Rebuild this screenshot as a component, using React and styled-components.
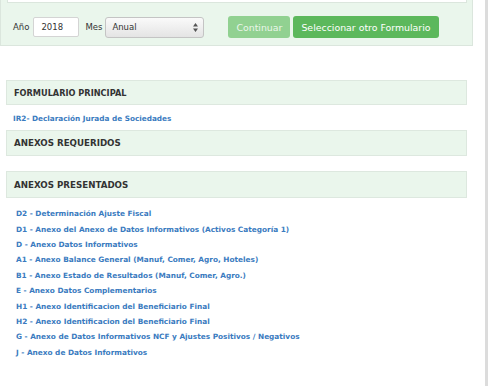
import React from 'react';
import styled, { createGlobalStyle } from 'styled-components';

const GlobalStyle = createGlobalStyle`
  html, body {
    margin: 0;
    padding: 0;
    background: #fff;
    font-family: 'DejaVu Sans', Verdana, sans-serif;
  }
`;

const Page = styled.div`
  display: flex;
  width: 490px;
  height: 386px;
  overflow: hidden;
`;

const Main = styled.div`
  width: 485px;
  display: flex;
  flex-direction: column;
`;

const Gutter = styled.div`
  width: 3px;
  background: #dcdcdc;
`;

const FilterPanel = styled.div`
  width: 471px;
  height: 45px;
  background: #eaf6ec;
  border: 1px solid #dbe6dd;
  border-top: none;
  display: flex;
  flex-direction: column;
`;

const PanelTop = styled.div`
  height: 2px;
  margin: 0 5px 0 6px;
  background: #fff;
  border: 1px solid #dbe6dd;
  border-top: none;
`;

const FilterRow = styled.div`
  display: flex;
  align-items: center;
  padding: 13px 0 0 12px;
`;

const Label = styled.label`
  font-size: 8.5px;
  color: #333;
  margin-right: ${p => p.$mr}px;
`;

const YearInput = styled.input`
  width: 46px;
  height: 20px;
  box-sizing: border-box;
  border: 1px solid #d4d4d4;
  border-radius: 2px;
  font-family: 'DejaVu Sans', Verdana, sans-serif;
  font-size: 8.5px;
  color: #333;
  padding: 0 7px;
  margin-right: 6px;
`;

const SelectBox = styled.div`
  width: 99px;
  height: 21px;
  box-sizing: border-box;
  border: 1px solid #c4c4c4;
  border-radius: 3px;
  background: linear-gradient(#fafafa, #e4e4e4);
  display: flex;
  align-items: center;
  justify-content: space-between;
  padding: 0 5px 0 6px;
  font-size: 8.5px;
  color: #333;
  margin-right: 24px;
`;

const Button = styled.button`
  height: 22px;
  border: none;
  border-radius: 3px;
  padding: 0 8px;
  background: ${p => (p.$disabled ? '#91d191' : '#5cb85c')};
  color: ${p => (p.$disabled ? '#eaf6ea' : '#fff')};
  font-family: 'DejaVu Sans', Verdana, sans-serif;
  font-size: 9.4px;
  margin-right: 3px;
`;

const Content = styled.div`
  display: flex;
  flex-direction: column;
  padding: 34px 0 0 6px;
  width: 461px;
`;

const SectionHeader = styled.div`
  box-sizing: border-box;
  height: ${p => p.$h}px;
  background: #eaf6ec;
  border: 1px solid #dde8df;
  display: flex;
  align-items: center;
  padding-left: 7px;
  font-weight: bold;
  font-size: ${p => p.$size}px;
  color: #333;
  margin-bottom: ${p => p.$mb}px;
`;

const MainLink = styled.a`
  font-size: 7.3px;
  font-weight: bold;
  color: #3a7bc0;
  text-decoration: none;
  padding-left: 7px;
  line-height: 9px;
  margin-bottom: 7px;
`;

const LinkList = styled.ul`
  list-style: none;
  margin: 0;
  padding: 8px 0 0 10px;
`;

const LinkItem = styled.li`
  height: 15.4px;
  display: flex;
  align-items: center;
  font-size: 7.35px;
  font-weight: bold;
  color: #3a7bc0;
`;

const anexos = [
  'D2 - Determinación Ajuste Fiscal',
  'D1 - Anexo del Anexo de Datos Informativos (Activos Categoría 1)',
  'D - Anexo Datos Informativos',
  'A1 - Anexo Balance General (Manuf, Comer, Agro, Hoteles)',
  'B1 - Anexo Estado de Resultados (Manuf, Comer, Agro.)',
  'E - Anexo Datos Complementarios',
  'H1 - Anexo Identificacion del Beneficiario Final',
  'H2 - Anexo Identificacion del Beneficiario Final',
  'G - Anexo de Datos Informativos NCF y Ajustes Positivos / Negativos',
  'J - Anexo de Datos Informativos',
];

const SelectArrows = () => (
  <svg width="5" height="9" viewBox="0 0 5 9">
    <path d="M2.5 0 L5 3.5 H0 Z M2.5 9 L5 5.5 H0 Z" fill="#555" />
  </svg>
);

export default function App() {
  return (
    <Page>
      <GlobalStyle />
      <Main>
        <FilterPanel>
          <PanelTop />
          <FilterRow>
            <Label $mr={4}>Año</Label>
            <YearInput defaultValue="2018" />
            <Label $mr={3}>Mes</Label>
            <SelectBox>
              <span>Anual</span>
              <SelectArrows />
            </SelectBox>
            <Button $disabled>Continuar</Button>
            <Button>Seleccionar otro Formulario</Button>
          </FilterRow>
        </FilterPanel>

        <Content>
          <SectionHeader $h={25} $size={8.2} $mb={9}>FORMULARIO PRINCIPAL</SectionHeader>
          <MainLink href="#">IR2- Declaración Jurada de Sociedades</MainLink>
          <SectionHeader $h={26} $size={8.7} $mb={15}>ANEXOS REQUERIDOS</SectionHeader>
          <SectionHeader $h={27} $size={8.7} $mb={0}>ANEXOS PRESENTADOS</SectionHeader>
          <LinkList>
            {anexos.map((a, i) => (
              <LinkItem key={i}>{a}</LinkItem>
            ))}
          </LinkList>
        </Content>
      </Main>
      <Gutter />
    </Page>
  );
}
